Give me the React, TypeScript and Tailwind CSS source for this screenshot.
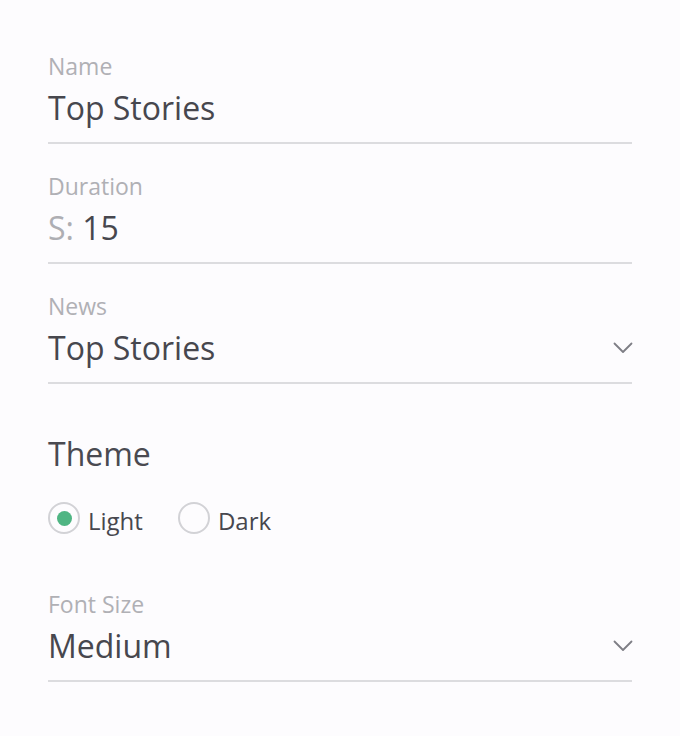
import React, { useState } from 'react';

const font = { fontFamily: '"Open Sans", "Liberation Sans", sans-serif' };

const Chevron: React.FC = () => (
  <svg width="20" height="12" viewBox="0 0 20 12" fill="none" className="mr-[-1px]">
    <polyline points="1.5,1.5 10,10 18.5,1.5" stroke="#7e7e85" strokeWidth="1.8" strokeLinecap="round" strokeLinejoin="round" />
  </svg>
);

interface FieldProps {
  label: string;
  children: React.ReactNode;
  select?: boolean;
}

const Field: React.FC<FieldProps> = ({ label, children, select }) => (
  <div className="flex flex-col border-b-2 border-[#dcdcdf] pb-[14px]">
    <span className="text-[23px] leading-[30px] text-[#b0b0b5]">{label}</span>
    <div className="mt-[7px] flex h-[40px] items-center justify-between">
      <span className="text-[32px] leading-[40px] text-[#47474e]">{children}</span>
      {select && <Chevron />}
    </div>
  </div>
);

const Radio: React.FC<{ label: string; checked: boolean; onClick: () => void }> = ({ label, checked, onClick }) => (
  <button onClick={onClick} className="flex items-center gap-[8px]">
    <span className="flex h-[32px] w-[32px] items-center justify-center rounded-full border-2 border-[#d2d2d6]">
      {checked && <span className="h-[15px] w-[15px] rounded-full bg-[#4fb583]" />}
    </span>
    <span className="mt-[6px] text-[24px] leading-[32px] text-[#47474e]">{label}</span>
  </button>
);

export default function App() {
  const [theme, setTheme] = useState<'light' | 'dark'>('light');

  return (
    <div style={font} className="min-h-[736px] w-full bg-[#fdfcfe] px-[48px] pt-[51px]">
      <div className="flex flex-col gap-[27px]">
        <Field label="Name">Top Stories</Field>
        <Field label="Duration">
          <span className="text-[#aeaeb3]">S:</span> 15
        </Field>
        <Field label="News" select>
          Top Stories
        </Field>
      </div>

      <h2 className="mt-[50px] text-[32px] leading-[40px] text-[#4a4a51]">Theme</h2>
      <div className="mt-[25px] flex items-center gap-[35px]">
        <Radio label="Light" checked={theme === 'light'} onClick={() => setTheme('light')} />
        <Radio label="Dark" checked={theme === 'dark'} onClick={() => setTheme('dark')} />
      </div>

      <div className="mt-[52px]">
        <Field label="Font Size" select>
          Medium
        </Field>
      </div>
    </div>
  );
}
